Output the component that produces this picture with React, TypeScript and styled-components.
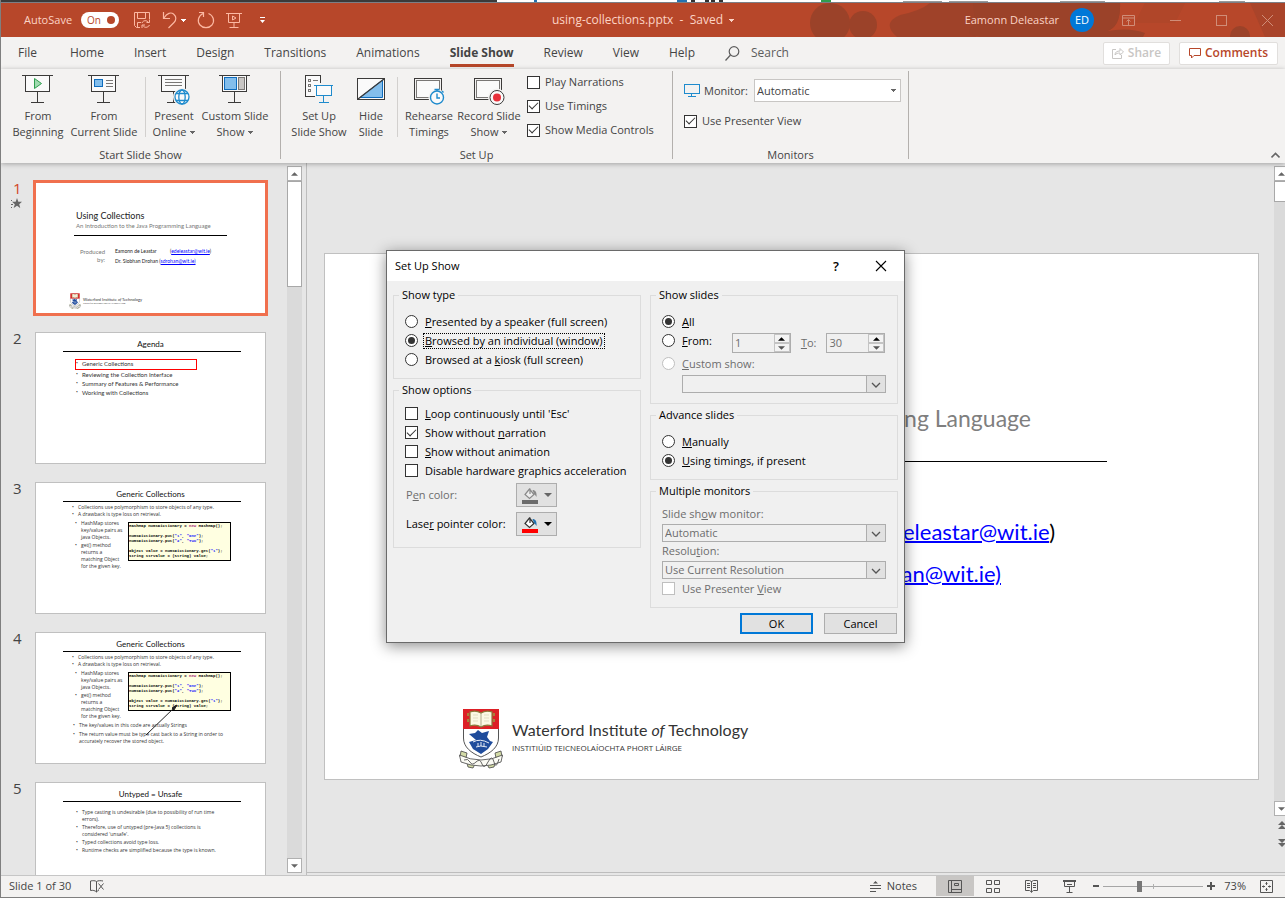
import React from "react";
import styled, { createGlobalStyle, css } from "styled-components";

const ui = '"Open Sans", "Noto Sans", sans-serif';
const slideFont = 'Lato, "Open Sans", sans-serif';
const brand = "#b7472a";
const ink = "#444444";

const GlobalStyle = createGlobalStyle`
  *, *::before, *::after { box-sizing: border-box; }
  body { margin: 0; font-family: ${ui}; font-size: 12px; line-height: 16px; color: ${ink}; }
  button, input, select { font: inherit; color: inherit; margin: 0; padding: 0; }
  button { background: none; border: 0; cursor: default; white-space: nowrap; }
  svg { display: block; flex: none; }
`;

/* ---------- window frame ---------- */
const Window = styled.div`
  display: flex;
  flex-direction: column;
  height: 100vh;
  overflow: hidden;
  border-left: 1px solid #7f7f7f;
  border-bottom: 1px solid #7f7f7f;
  background: #e6e6e6;
`;
const Backdrop = styled.div`
  flex: none;
  display: flex;
  height: 3px;
  background: #fff;
  border-bottom: 1px solid #7c7f86;
`;
const BackdropDark = styled.div`
  width: 496px;
  background: #3a3a3a;
`;

const TitleBar = styled.header`
  position: relative;
  flex: none;
  display: flex;
  align-items: center;
  justify-content: space-between;
  height: 34px;
  background: ${brand};
  color: #fcd4c6;
`;
const TitleArt = styled.svg`
  position: absolute;
  top: 0;
  right: 0;
`;
const QuickAccess = styled.div`
  display: flex;
  align-items: center;
  padding-left: 23px;
  gap: 11px;
`;
const AutoSave = styled.label`
  display: flex;
  align-items: center;
  gap: 9px;
  padding-right: 3px;
  font-size: 11px;
`;
const Toggle = styled.button`
  display: flex;
  align-items: center;
  justify-content: space-between;
  width: 38px;
  height: 16px;
  padding: 0 4px 0 6px;
  border-radius: 8px;
  background: #fff;
  color: ${brand};
  font-size: 10px;
  &::after {
    content: "";
    width: 8px;
    height: 8px;
    border-radius: 50%;
    background: ${brand};
  }
`;
const QuickButton = styled.button`
  display: flex;
  align-items: center;
  gap: 4px;
`;
const DocTitle = styled.h1`
  position: absolute;
  left: 0;
  right: 0;
  margin: 0;
  display: flex;
  justify-content: center;
  align-items: center;
  gap: 6px;
  font-size: 12px;
  font-weight: 400;
`;
const Account = styled.div`
  position: relative;
  display: flex;
  align-items: center;
  font-size: 11px;
`;
const Avatar = styled.span`
  display: grid;
  place-items: center;
  width: 24px;
  height: 24px;
  margin: 0 28px 0 11px;
  border-radius: 50%;
  background: #0078d7;
  color: #fff;
  font-size: 11px;
`;
const WindowButtons = styled.div`
  display: flex;
  align-items: center;
  gap: 35px;
  padding-right: 12px;
`;

/* ---------- ribbon ---------- */
const TabRow = styled.nav`
  flex: none;
  display: flex;
  align-items: center;
  height: 32px;
  padding: 0 7px 0 17px;
  background: #f3f2f1;
`;
const Tab = styled.button<{ $active?: boolean }>`
  height: 28px;
  margin-right: 30px;
  border-top: 3px solid transparent;
  border-bottom: 3px solid ${(p) => (p.$active ? brand : "transparent")};
  font-weight: ${(p) => (p.$active ? 700 : 400)};
  &:first-child { margin-right: 33px; }
`;
const SearchButton = styled.button`
  display: flex;
  align-items: center;
  gap: 11px;
  color: #5c5c5c;
`;
const TabActions = styled.div`
  display: flex;
  gap: 9px;
  margin-left: auto;
`;
const ActionButton = styled.button<{ $muted?: boolean }>`
  display: flex;
  align-items: center;
  justify-content: center;
  gap: 4px;
  width: ${(p) => (p.$muted ? 67 : 99)}px;
  height: 23px;
  background: #fff;
  border: 1px solid #e1dfdd;
  border-radius: 2px;
  color: ${(p) => (p.$muted ? "#c8c6c4" : brand)};
  font-weight: 600;
`;
const Ribbon = styled.div`
  position: relative;
  z-index: 1;
  flex: none;
  display: flex;
  height: 94px;
  padding-top: 2px;
  background: #f3f2f1;
  box-shadow: 0 1px 5px rgba(0, 0, 0, 0.3);
`;
const Group = styled.section`
  display: flex;
  flex-direction: column;
  justify-content: space-between;
  height: 88px;
  padding: 0 7px;
  border-right: 1px solid #b3b0ad;
`;
const GroupBody = styled.div`
  display: flex;
`;
const GroupLabel = styled.div`
  text-align: center;
  font-size: 11px;
  line-height: 8px;
`;
const BigButton = styled.button<{ $w: number }>`
  display: flex;
  flex-direction: column;
  align-items: center;
  width: ${(p) => p.$w}px;
  padding-top: 3px;
  font-size: 11px;
  & svg.big { margin-bottom: 3px; }
`;
const Line = styled.span`
  display: flex;
  align-items: center;
  gap: 4px;
`;
const Divider = styled.i`
  width: 1px;
  height: 60px;
  margin: 6px 5px 0;
  background: #d2d0ce;
`;
const CheckColumn = styled.div`
  display: flex;
  flex-direction: column;
  gap: 8px;
  width: 142px;
  padding: 3px 0 0 4px;
  font-size: 11px;
`;
const MonitorColumn = styled.div`
  display: flex;
  flex-direction: column;
  gap: 11px;
  width: 221px;
  padding: 8px 0 0 4px;
  font-size: 11px;
`;
const CheckLabel = styled.label`
  display: flex;
  align-items: center;
  gap: 5px;
  white-space: nowrap;
`;
const MonitorRow = styled.label`
  display: flex;
  align-items: center;
  gap: 4px;
`;
const Collapse = styled.button`
  position: absolute;
  right: 5px;
  bottom: 4px;
`;

/* ---------- form controls ---------- */
const box = css`
  appearance: none;
  flex: none;
  display: grid;
  place-items: center;
  width: 13px;
  height: 13px;
  background: #fff;
  border: 1px solid #333;
  &:disabled { border-color: #bfbfbf; }
`;
const Check = styled.input.attrs({ type: "checkbox" })`
  ${box}
  &:checked::after {
    content: "";
    width: 9px;
    height: 5px;
    margin-top: -3px;
    border-left: 1px solid #333;
    border-bottom: 1px solid #333;
    transform: rotate(-45deg);
  }
`;
const Radio = styled.input.attrs({ type: "radio" })`
  ${box}
  border-radius: 50%;
  &:checked::after {
    content: "";
    width: 7px;
    height: 7px;
    border-radius: 50%;
    background: #333;
  }
`;
const SelectWrap = styled.span`
  position: relative;
  display: block;
  flex: 1;
`;
const SelectArrow = styled.span<{ $boxed?: boolean }>`
  position: absolute;
  top: 0;
  right: 0;
  bottom: 0;
  display: grid;
  place-items: center;
  width: ${(p) => (p.$boxed ? 20 : 16)}px;
  pointer-events: none;
  ${(p) => p.$boxed && "padding-top: 2px; border: 1px solid #adadad; background: #e1e1e1;"}
`;
const RibbonSelect = styled.select`
  appearance: none;
  display: block;
  width: 147px;
  height: 23px;
  margin-left: auto;
  padding-left: 2px;
  background: #fff;
  border: 1px solid #c8c6c4;
  border-radius: 0;
`;
const DialogSelect = styled.select`
  appearance: none;
  display: block;
  width: 100%;
  height: 18px;
  padding-left: 2px;
  background: #f0f0f0;
  border: 1px solid #adadad;
  border-radius: 0;
  line-height: 14px;
  color: #6d6d6d;
  opacity: 1;
`;

/* ---------- workspace ---------- */
const Workspace = styled.main`
  flex: 1;
  display: flex;
  min-height: 0;
  background: #e6e6e6;
`;
const ThumbPane = styled.aside`
  flex: none;
  display: flex;
  width: 306px;
  padding-right: 4px;
  border-right: 1px solid #bdbdbd;
`;
const ThumbList = styled.ol`
  flex: 1;
  display: flex;
  flex-direction: column;
  gap: 18px;
  margin: 0;
  padding: 19px 0 0;
  list-style: none;
  overflow: hidden;
`;
const ThumbItem = styled.li`
  flex: none;
  display: flex;
`;
const ThumbNumber = styled.div<{ $active?: boolean }>`
  width: 34px;
  padding: 0 0 0 12px;
  font-size: 15px;
  line-height: 12px;
  color: ${(p) => (p.$active ? "#d24726" : ink)};
  & svg { margin: 4px 0 0 -2px; }
`;
const Thumb = styled.div<{ $active?: boolean }>`
  width: 231px;
  height: 132px;
  background: #fff;
  border: 1px solid #c0c0c0;
  font-family: ${slideFont};
  font-size: 6px;
  line-height: 7px;
  color: #333;
  ${(p) => p.$active && "border-color: #f0704e; box-shadow: 0 0 0 2px #f0704e;"}
`;
const ThumbTitle = styled.h2`
  margin: 0 24px 0 27px;
  padding: 5px 3px 1px 0;
  border-bottom: 1px solid #000;
  text-align: center;
  font-size: 8px;
  line-height: 12px;
  font-weight: 400;
  color: #111;
`;
const Bullets = styled.ul<{ $left: number; $top?: number; $gap?: number; $width?: number; $dense?: boolean }>`
  flex: none;
  display: flex;
  flex-direction: column;
  gap: ${(p) => p.$gap ?? 0}px;
  margin: ${(p) => p.$top ?? 0}px 0 0 ${(p) => p.$left}px;
  padding: 0;
  list-style: none;
  ${(p) => p.$width && `width: ${p.$width}px;`}
  ${(p) => p.$dense && `font-family: ${ui}; font-size: 5px;`}
  & li { display: flex; gap: 4px; white-space: pre; }
  & li::before { content: "•"; width: 2px; font-family: ${ui}; font-size: 5px; }
`;
const CodeRow = styled.div`
  display: flex;
  gap: 3px;
  align-items: flex-start;
  height: 54px;
`;
const Code = styled.pre`
  width: 103px;
  height: 39px;
  margin: 4px 0 0;
  padding: 1px 0 0;
  border: 1px solid #000;
  background: #ffffe1;
  font: 700 4px/5px "Liberation Mono", monospace;
  color: #000;
  & b { color: #a31571; }
  & q { color: #1a1aff; quotes: none; }
`;
const Boxed = styled.div`
  width: 122px;
  height: 11px;
  margin: 7px 0 0 39px;
  border: 1px solid #f00;
`;
const Arrow = styled.svg`
  position: absolute;
  left: 108px;
  top: 70px;
`;
const ThumbFrame = styled.div`
  position: relative;
`;
const MiniIntro = styled.div`
  margin: 27px 38px 0 38px;
  padding: 0 0 5px 2px;
  border-bottom: 1px solid #000;
  line-height: 9px;
  font-size: 6px;
  color: #777;
  & strong { display: block; font-weight: 400; font-size: 9px; line-height: 11px; color: #222; }
`;
const MiniAuthors = styled.div`
  display: grid;
  grid-template-columns: 26px 45px auto;
  gap: 3px 10px;
  justify-content: start;
  margin: 12px 0 28px 43px;
  white-space: nowrap;
  font-size: 5px;
  color: #222;
  & > span:first-child { grid-row: span 2; white-space: normal; text-align: right; font-size: 6px; line-height: 8px; color: #777; }
  & > span:last-child { grid-column: 2 / span 2; }
`;
const Mail = styled.a`
  color: #0000ff;
  text-decoration: underline;
`;
const Brand = styled.div<{ $mini?: boolean }>`
  display: flex;
  align-items: center;
  gap: ${(p) => (p.$mini ? 2 : 8)}px;
  margin-left: ${(p) => (p.$mini ? 33 : 0)}px;
  white-space: nowrap;
  color: #333;
  font-family: ${slideFont};
  font-size: ${(p) => (p.$mini ? 4 : 16)}px;
  line-height: ${(p) => (p.$mini ? 5 : 20)}px;
  & small {
    display: block;
    font-family: ${ui};
    font-size: ${(p) => (p.$mini ? 2 : 8)}px;
    line-height: ${(p) => (p.$mini ? 4 : 16)}px;
  }
`;

const ScrollTrack = styled.div`
  flex: none;
  display: flex;
  flex-direction: column;
  width: 15px;
  margin-top: 3px;
  background: #dadada;
`;
const ScrollButton = styled.button`
  display: grid;
  place-items: center;
  height: 15px;
  background: #fff;
  border: 1px solid #b0b0b0;
`;
const ScrollThumb = styled.div<{ $h: number }>`
  height: ${(p) => p.$h}px;
  margin-bottom: auto;
  background: #fff;
  border: 1px solid #a8a8a8;
`;
const JumpButton = styled.button`
  display: grid;
  place-items: center;
  height: 18px;
  background: #e6e6e6;
`;
const ThumbScroll = styled(ScrollTrack)`
  margin-bottom: 2px;
`;
const StageScroll = styled(ScrollTrack)`
  width: 11px;
  overflow: hidden;
  margin-bottom: 20px;
  & > * { flex: none; width: 15px; }
`;
const Stage = styled.section`
  flex: 1;
  display: flex;
  min-width: 0;
  margin-bottom: 2px;
  border-bottom: 1px solid #bdbdbd;
`;
const StageCenter = styled.div`
  flex: 1;
  display: flex;
  align-items: center;
  min-width: 0;
  padding: 0 15px 2px 17px;
`;
const Slide = styled.article`
  flex: 1;
  display: flex;
  flex-direction: column;
  min-width: 0;
  aspect-ratio: 71 / 40;
  padding: 149px 0 10px;
  background: #fff;
  border: 1px solid #c0c0c0;
  font-family: ${slideFont};
  white-space: nowrap;
`;
const Subtitle = styled.p`
  margin: 0 227px 0 0;
  text-align: right;
  font-size: 23px;
  line-height: 30px;
  color: #7f7f7f;
`;
const Rule = styled.hr`
  align-self: stretch;
  height: 1px;
  margin: 28px 151px 49px 159px;
  border: 0;
  background: #000;
`;
const MailRow = styled.p<{ $right: number }>`
  margin: 0 ${(p) => p.$right}px 0 0;
  text-align: right;
  font-size: 22px;
  line-height: 42px;
  color: #000;
  & a { text-decoration-thickness: 2px; }
`;
const SlideBrand = styled.footer`
  margin: auto 0 0 133px;
`;

/* ---------- status bar ---------- */
const StatusBar = styled.footer`
  flex: none;
  display: flex;
  align-items: center;
  height: 22px;
  padding: 0 12px 1px 8px;
  background: #f3f2f1;
  border-top: 1px solid #c6c6c6;
  font-size: 11px;
`;
const StatusButton = styled.button<{ $active?: boolean }>`
  display: grid;
  place-items: center;
  width: 38px;
  height: 20px;
  background: ${(p) => (p.$active ? "#c8c6c4" : "transparent")};
`;
const NotesButton = styled.button`
  display: flex;
  align-items: center;
  gap: 6px;
  margin: 0 19px 0 auto;
`;
const ProofButton = styled.button`
  margin-left: 19px;
`;
const ZoomButton = styled.button`
  width: 15px;
  height: 20px;
  display: grid;
  place-items: center;
`;
const Zoom = styled.input.attrs({ type: "range" })`
  appearance: none;
  width: 100px;
  height: 13px;
  background:
    linear-gradient(#b0b0b0, #b0b0b0) 50px 4px / 1px 5px no-repeat,
    linear-gradient(#a6a6a6, #a6a6a6) 0 6px / 100% 1px no-repeat;
  &::-webkit-slider-thumb {
    appearance: none;
    width: 5px;
    height: 11px;
    background: #777;
  }
`;
const ZoomText = styled.button`
  width: 28px;
  margin-right: 14px;
  text-align: right;
`;

/* ---------- dialog ---------- */
const Dialog = styled.div`
  position: absolute;
  z-index: 5;
  left: 386px;
  top: 250px;
  width: 519px;
  background: #f0f0f0;
  border: 1px solid #6a6a6a;
  box-shadow: 0 3px 14px rgba(0, 0, 0, 0.45);
  color: #000;
  font-size: 11px;
  line-height: 14px;
`;
const DialogHeader = styled.div`
  display: flex;
  align-items: center;
  height: 30px;
  padding: 0 17px 0 8px;
  background: #fff;
`;
const DialogTitle = styled.h2`
  flex: 1;
  margin: 0;
  font-size: 11px;
  font-weight: 400;
`;
const HelpButton = styled.button`
  margin-right: 36px;
  font-size: 13px;
  font-weight: 600;
`;
const DialogBody = styled.div`
  display: grid;
  grid-template-columns: 1fr 1fr;
  gap: 9px;
  padding: 7px 6px 0;
`;
const Column = styled.div`
  display: flex;
  flex-direction: column;
  gap: 4px;
`;
const FieldGroup = styled.fieldset<{ $top?: number }>`
  margin: 0;
  padding: ${(p) => p.$top ?? 10}px 11px 9px 11px;
  min-width: 0;
  border: 1px solid #dcdcdc;
`;
const Legend = styled.legend`
  margin-left: -6px;
  padding: 0 3px;
`;
const Option = styled.label<{ $off?: boolean }>`
  display: flex;
  align-items: center;
  gap: 6px;
  height: 19px;
  white-space: nowrap;
  color: ${(p) => (p.$off ? "#6d6d6d" : "#000")};
`;
const OptionText = styled.span<{ $focus?: boolean }>`
  padding: 0 1px;
  ${(p) => p.$focus && "outline: 1px dotted #000;"}
`;
const RangeRow = styled.div`
  display: flex;
  align-items: flex-start;
  height: 23px;
`;
const SpinLabel = styled.label<{ $gap?: number }>`
  display: flex;
  align-items: center;
  height: 20px;
  margin: 2px 0 0 ${(p) => p.$gap ?? 10}px;
  color: #6d6d6d;
`;
const SpinBox = styled.span`
  display: flex;
  width: 59px;
  height: 20px;
  border: 1px solid #adadad;
`;
const SpinInput = styled.input`
  flex: 1;
  width: 100%;
  min-width: 0;
  padding-left: 2px;
  border: 0;
  background: transparent;
`;
const SpinButtons = styled.span`
  display: grid;
  width: 16px;
  & button { display: grid; place-items: center; border: 1px solid #c4c4c4; background: #f3f3f3; }
`;
const ColorRow = styled.div<{ $off?: boolean }>`
  display: flex;
  align-items: center;
  height: 24px;
  margin: 3px 0 5px;
  padding-left: 1px;
  color: ${(p) => (p.$off ? "#6d6d6d" : "#000")};
  & + & { margin: 0 0 2px; }
  & > span { width: 110px; }
`;
const ColorButton = styled.button`
  display: flex;
  align-items: center;
  justify-content: center;
  gap: 5px;
  width: 41px;
  height: 24px;
  background: #e1e1e1;
  border: 1px solid #adadad;
`;
const Field = styled.label<{ $indent?: boolean }>`
  display: block;
  padding: ${(p) => (p.$indent ? "2px 0 1px 20px" : "0")};
  color: #6d6d6d;
`;
const FieldText = styled.span`
  display: block;
  padding: 2px 0 3px;
`;
const DialogButtons = styled.div`
  display: flex;
  justify-content: flex-end;
  gap: 11px;
  padding: 5px 7px 8px;
`;
const PushButton = styled.button<{ $primary?: boolean }>`
  width: 73px;
  height: 21px;
  background: #e1e1e1;
  border: ${(p) => (p.$primary ? "2px solid #0078d7" : "1px solid #adadad")};
`;

/* ---------- icons ---------- */
const Caret = ({ color = "#666", w = 5 }: { color?: string; w?: number }) => (
  <svg width={w} height={(w + 1) / 2} viewBox={`0 0 ${w} ${(w + 1) / 2}`} fill={color} shapeRendering="crispEdges">
    <path d={`M0 0H${w}L${w / 2} ${(w + 1) / 2}Z`} />
  </svg>
);
const Tri = ({ up, w = 7, color = "#666" }: { up?: boolean; w?: number; color?: string }) => (
  <svg width={w} height="4" viewBox="0 0 8 4" fill={color}>
    <path d={up ? "M0 4L4 0L8 4Z" : "M0 0H8L4 4Z"} />
  </svg>
);
const Screen = ({ children }: { children: React.ReactNode }) => (
  <svg className="big" width="34" height="31" viewBox="0 0 34 31" fill="none" stroke="#3b3a39" shapeRendering="crispEdges">
    <path d="M4.5 2V17.5H28.5V2" fill="#fafafa" />
    <path d="M1 1.5H32M16.5 18V28M10 28.5H23" />
    {children}
  </svg>
);
const icons = {
  beginning: (
    <Screen>
      <path d="M13.500 4.500L20.500 9.500L13.500 14.500Z" fill="#a0dbb0" stroke="#2f9e4f" shapeRendering="auto" />
    </Screen>
  ),
  current: (
    <Screen>
      <rect x="7.500" y="5.500" width="8" height="7" fill="#83beec" stroke="#0f6cbd" />
      <path d="M19 6.500H26M19 9.500H26M19 12.500H26" stroke="#797775" />
    </Screen>
  ),
  online: (
    <Screen>
      <path d="M8 5.500H25M8 8.500H25M8 11.500H25" stroke="#797775" />
      <g stroke="#1e8bcd" strokeWidth="1.300" shapeRendering="auto">
        <circle cx="25" cy="23" r="9" fill="#f3f2f1" stroke="none" />
        <circle cx="25" cy="23" r="7" fill="#fafafa" />
        <ellipse cx="25" cy="23" rx="3.200" ry="7" />
        <path d="M19 19.500H31M19 26.500H31" />
      </g>
    </Screen>
  ),
  custom: (
    <Screen>
      <rect x="6.500" y="3.500" width="12" height="12" fill="#83beec" stroke="#0f6cbd" />
      <rect x="20.500" y="3.500" width="6" height="12" fill="#c8c6c4" stroke="#797775" />
    </Screen>
  ),
  setup: (
    <svg className="big" width="30" height="31" viewBox="0 0 30 31" fill="none" stroke="#3b3a39" shapeRendering="crispEdges">
      <path d="M11 22.500H1.500V1.500H16.500V9" fill="#fafafa" />
      <rect x="4.500" y="5.500" width="2" height="2" stroke="#797775" />
      <rect x="4.500" y="10.500" width="2" height="2" stroke="#797775" />
      <rect x="4.500" y="15.500" width="2" height="2" stroke="#797775" />
      <path d="M9 6.500H14" stroke="#797775" />
      <g stroke="#1e8bcd">
        <path d="M12.500 12V21.500H27.500V12" fill="#fafafa" />
        <path d="M10 11.500H29M19.500 22V28M15 28.500H25" />
      </g>
    </svg>
  ),
  hide: (
    <svg className="big" width="30" height="31" viewBox="0 0 30 31" fill="none" stroke="#3b3a39">
      <rect x="1.500" y="4.500" width="27" height="21" fill="#fafafa" />
      <path d="M4 23.500H26.500V6Z" fill="#83beec" stroke="#0f6cbd" />
      <path d="M2 25L28 5" strokeWidth="1.300" />
    </svg>
  ),
  rehearse: (
    <svg className="big" width="32" height="31" viewBox="0 0 32 31" fill="none" stroke="#3b3a39">
      <rect x="1.500" y="4.500" width="27" height="21" fill="#f3f2f1" />
      <rect x="3.500" y="6.500" width="23" height="17" fill="#fafafa" stroke="#797775" />
      <circle cx="24" cy="23.500" r="8.500" fill="#f3f2f1" stroke="none" />
      <g stroke="#1e8bcd" strokeWidth="1.400">
        <circle cx="24" cy="23.500" r="6.500" fill="#fafafa" />
        <path d="M24 19.500V24H27M21.500 15.500H26.500M24 15.500V17M29 17L30.500 18.500" />
      </g>
    </svg>
  ),
  record: (
    <svg className="big" width="32" height="31" viewBox="0 0 32 31" fill="none" stroke="#3b3a39">
      <rect x="1.500" y="4.500" width="27" height="21" fill="#f3f2f1" />
      <rect x="3.500" y="6.500" width="23" height="17" fill="#fafafa" stroke="#797775" />
      <circle cx="24" cy="23.500" r="9" fill="#f3f2f1" stroke="none" />
      <circle cx="24" cy="23.500" r="7" fill="#fafafa" />
      <circle cx="24" cy="23.500" r="4" fill="#e8303a" stroke="none" />
    </svg>
  ),
};
const Bucket = ({ bar, off }: { bar: string; off?: boolean }) => (
  <svg width="17" height="17" viewBox="0 0 17 17" fill="none">
    <path d="M8 1.500V7M7.500 2L3 7.500L7.500 11.500L12 7.500L7.500 2Z" stroke={off ? "#8a8a8a" : "#333"} fill={off ? "#eee" : "#fff"} strokeWidth="1.200" />
    <path d="M10.500 3C13.500 3 15 5.500 14.500 10C13.500 8.500 13 7.500 12 7Z" fill={off ? "#8a8a8a" : "#2472b0"} />
    <rect y="13" width="16" height="4" fill={bar} />
  </svg>
);
const Crest = ({ width, height }: { width: number; height: number }) => (
  <svg width={width} height={height} viewBox="0 0 46 61">
    <path d="M5.500 20V30C5.500 39 13 45 23 49C33 45 40.500 39 40.500 30V20Z" fill="#fff" stroke="#555" />
    <path d="M5 1H41V21H5Z" fill="#dd1f26" />
    <path d="M12 4Q18 2 23 5Q28 2 34 4V18Q28 16 23 19Q18 16 12 18Z" fill="#fbf8e4" stroke="#8a7a3c" strokeWidth="1.200" />
    <path d="M23 5V19" stroke="#8f8764" strokeWidth="0.700" />
    <path d="M15 7H20M26 7H31M15 10H20M26 10H31M15 13H20M26 13H31" stroke="#d8d3b8" strokeWidth="0.700" />
    <path d="M10 5V8M10 11V14M36 5V8M36 11V14" stroke="#a8803a" strokeWidth="2" />
    <path d="M11 26L17 25L20 22L24 25L31 23L29 29L32 33L35 34L30 41L23 46L15 41L11 34L18 32Z" fill="#1f4c9c" />
    <path d="M15 34Q22 30 31 35M20 38V35M23 38V34M26 38V35M18 39Q22 37 29 39" stroke="#fff" strokeWidth="0.900" fill="none" />
    <path d="M3 43L9 45L8 50L2 49ZM43 43L37 45L38 50L44 49Z" fill="#d3dba6" stroke="#444" strokeWidth="0.800" />
    <path d="M9 55L17 56L15 60L10 59ZM37 55L29 56L31 60L36 59Z" fill="#d3dba6" stroke="#444" strokeWidth="0.800" />
    <path d="M1.500 47Q23 57 44.500 47L43 54Q23 62 3 54Z" fill="#fbfbf4" stroke="#444" strokeWidth="0.800" />
    <path d="M6 52Q10 50 12 54T18 54T24 56T30 54T36 54T41 51" stroke="#555" strokeWidth="0.900" fill="none" />
  </svg>
);
const Logo = ({ mini }: { mini?: boolean }) => (
  <Brand $mini={mini}>
    <Crest width={mini ? 12 : 46} height={mini ? 16 : 61} />
    <div>
      Waterford Institute <em>of</em> Technology
      <small>INSTITIÚID TEICNEOLAÍOCHTA PHORT LÁIRGE</small>
    </div>
  </Brand>
);
const Chevron = () => (
  <svg width="10" height="6" viewBox="0 0 10 6" fill="none" stroke="#555" strokeWidth="1.300">
    <path d="M1 1L5 5L9 1" />
  </svg>
);

/* ---------- content ---------- */
const CodeSample = () => (
  <Code>
    {"HashMap numsDictionary = "}<b>new</b>{" HashMap();\n\nnumsDictionary.put("}<q>"1"</q>{", "}<q>"One"</q>{");\nnumsDictionary.put("}<q>"2"</q>{", "}<q>"Two"</q>{");\n\nObject value = numsDictionary.get("}<q>"1"</q>{");\nString strValue = (String) value;"}
  </Code>
);
const GenericContent = () => (
  <>
    <ThumbTitle>Generic Collections</ThumbTitle>
    <Bullets $dense $left={36} $top={2}>
      <li>Collections use polymorphism to store objects of any type.</li>
      <li>A drawback is type loss on retrieval.</li>
    </Bullets>
    <CodeRow>
      <Bullets $dense $left={39} $top={2} $gap={1} $width={50}>
        <li>{"HashMap stores\nkey/value pairs as\njava Objects."}</li>
        <li>{"get() method\nreturns a\nmatching Object\nfor the given key."}</li>
      </Bullets>
      <CodeSample />
    </CodeRow>
  </>
);

const Opt = ({ radio, off, focus, name, checked, children }: {
  radio?: boolean; off?: boolean; focus?: boolean; name?: string; checked?: boolean; children: React.ReactNode;
}) => (
  <Option $off={off}>
    {radio ? <Radio name={name} defaultChecked={checked} disabled={off} /> : <Check defaultChecked={checked} disabled={off} />}
    <OptionText $focus={focus}>{children}</OptionText>
  </Option>
);
const Drop = ({ value, label }: { value?: string; label?: string }) => (
  <SelectWrap>
    <DialogSelect disabled aria-label={label}>
      <option>{value}</option>
    </DialogSelect>
    <SelectArrow $boxed><Chevron /></SelectArrow>
  </SelectWrap>
);
const Spin = ({ value, label, id }: { value: string; label: string; id: string }) => (
  <SpinBox>
    <SpinInput id={id} defaultValue={value} aria-label={label} />
    <SpinButtons>
      <button aria-label={`Increase ${label}`}><Tri up color="#000" /></button>
      <button aria-label={`Decrease ${label}`}><Tri color="#555" /></button>
    </SpinButtons>
  </SpinBox>
);

const SetUpShow = () => (
  <Dialog role="dialog" aria-labelledby="setup-title">
    <DialogHeader>
      <DialogTitle id="setup-title">Set Up Show</DialogTitle>
      <HelpButton>?</HelpButton>
      <button aria-label="Close">
        <svg width="12" height="12" viewBox="0 0 12 12" stroke="#000" strokeWidth="1.100"><path d="M1 1L11 11M11 1L1 11" /></svg>
      </button>
    </DialogHeader>
    <DialogBody>
      <Column>
        <FieldGroup>
          <Legend>Show type</Legend>
          <Opt radio name="type"><u>P</u>resented by a speaker (full screen)</Opt>
          <Opt radio name="type" checked focus><u>B</u>rowsed by an individual (window)</Opt>
          <Opt radio name="type">Browsed at a <u>k</u>iosk (full screen)</Opt>
        </FieldGroup>
        <FieldGroup $top={7}>
          <Legend>Show options</Legend>
          <Opt><u>L</u>oop continuously until 'Esc'</Opt>
          <Opt checked>Show without <u>n</u>arration</Opt>
          <Opt><u>S</u>how without animation</Opt>
          <Opt>Disable hardware <u>g</u>raphics acceleration</Opt>
          <ColorRow $off>
            <span>P<u>e</u>n color:</span>
            <ColorButton disabled aria-label="Pen color"><Bucket bar="#6b6b6b" off /><Tri w={8} /></ColorButton>
          </ColorRow>
          <ColorRow>
            <span>Lase<u>r</u> pointer color:</span>
            <ColorButton aria-label="Laser pointer color"><Bucket bar="#f00" /><Tri w={8} color="#000" /></ColorButton>
          </ColorRow>
        </FieldGroup>
      </Column>
      <Column>
        <FieldGroup>
          <Legend>Show slides</Legend>
          <Opt radio name="slides" checked><u>A</u>ll</Opt>
          <RangeRow>
            <Opt radio name="slides"><u>F</u>rom:</Opt>
            <SpinLabel as="span" $gap={19}><Spin id="from-slide" value="1" label="From slide" /></SpinLabel>
            <SpinLabel htmlFor="to-slide"><u>T</u>o:</SpinLabel>
            <SpinLabel as="span"><Spin id="to-slide" value="30" label="To slide" /></SpinLabel>
          </RangeRow>
          <Opt radio name="slides" off><u>C</u>ustom show:</Opt>
          <Field $indent><Drop label="Custom show" /></Field>
        </FieldGroup>
        <FieldGroup>
          <Legend>Advance slides</Legend>
          <Opt radio name="advance"><u>M</u>anually</Opt>
          <Opt radio name="advance" checked><u>U</u>sing timings, if present</Opt>
        </FieldGroup>
        <FieldGroup $top={7}>
          <Legend>Multiple monitors</Legend>
          <Field><FieldText>Slide sh<u>o</u>w monitor:</FieldText><Drop value="Automatic" /></Field>
          <Field><FieldText>Resolu<u>t</u>ion:</FieldText><Drop value="Use Current Resolution" /></Field>
          <Opt off>Use Presenter <u>V</u>iew</Opt>
        </FieldGroup>
      </Column>
    </DialogBody>
    <DialogButtons>
      <PushButton $primary>OK</PushButton>
      <PushButton>Cancel</PushButton>
    </DialogButtons>
  </Dialog>
);

const tabs = ["File", "Home", "Insert", "Design", "Transitions", "Animations", "Slide Show", "Review", "View", "Help"];

export default function App() {
  return (
    <Window>
      <GlobalStyle />
      <Backdrop>
        <BackdropDark />
        <svg width="780" height="2" aria-hidden="true">
          <path d="M37 0H40V2H37ZM180 0H190V2H180Z" fill="#2472b0" />
          <path d="M194 0H198V2H194ZM208 0H212V2H208ZM214 0H218V2H214ZM222 0H226V2H222Z" fill="#333" />
          <path d="M324 0H334V2H324Z" fill="#2f9e4f" />
          <path d="M406 1H445V2H406ZM452 1H491V2H452ZM563 1H608V2H563ZM722 1H748V2H722Z" fill="#999" />
        </svg>
      </Backdrop>
      <TitleBar>
        <TitleArt width="500" height="34" viewBox="0 0 500 34" fill="#9b4229" aria-hidden="true">
          <circle cx="45" cy="20" r="20" /><circle cx="78" cy="22" r="14" />
          <path d="M145 0H335Q336 24 322 28H208Q200 28 190 34H112Q96 20 115 12Q135 8 145 0Z" opacity="0.850" />
          <path d="M188 0H335Q336 24 322 28Q345 24 360 30L358 34H200Q175 34 190 20Z" />
          <path d="M360 0H400L390 20H350Z" opacity="0.250" />
          <circle cx="455" cy="33" r="10" /><path d="M465 0H500V34H480Z" opacity="0.500" />
        </TitleArt>
        <QuickAccess>
          <AutoSave>AutoSave<Toggle role="switch" aria-checked="true">On</Toggle></AutoSave>
          <QuickButton aria-label="Save">
            <svg width="18" height="18" viewBox="0 0 18 18" fill="none" stroke="#fcb8a2">
              <path d="M7 16.500H3.500L1.500 14.500V1.500H16.500V8M4.500 2V7.500H12.500V2M4.500 16V11.500H8" />
              <path d="M9 12C10 9 14 9 15.500 11.500M16.500 8.500V11.500H13.500M16.500 14C15 17 11 17 10 14.500M9 17V14H12" />
            </svg>
          </QuickButton>
          <QuickButton aria-label="Undo">
            <svg width="15" height="18" viewBox="0 0 15 18" fill="none" stroke="#fcb8a2" strokeWidth="1.200">
              <path d="M1.500 1V7.500H8M2 7C5 2 9 1 11.500 3C14.500 5.500 14.500 9 12 11.500L6.500 17" />
            </svg>
            <Caret color="#fff" />
          </QuickButton>
          <QuickButton aria-label="Redo">
            <svg width="18" height="18" viewBox="0 0 18 18" fill="none" stroke="#fcb8a2" strokeWidth="1.200">
              <path d="M2 1.500H6.500V6M6 2.500C1 5 0 10.500 3 14C6 17.500 12 17.500 15 14C18 10 16.500 4.500 11.500 2.500" />
            </svg>
          </QuickButton>
          <QuickButton aria-label="Start from beginning">
            <svg width="16" height="18" viewBox="0 0 16 18" fill="none" stroke="#fcb8a2">
              <path d="M0 2.500H16M2.500 3V11.500H13.500V3M8 12V16M3.500 16.500H12.500M6.500 5L10 7L6.500 9Z" />
            </svg>
          </QuickButton>
          <QuickButton aria-label="Customize">
            <svg width="18" height="8" viewBox="0 0 18 8" fill="#fff"><path d="M7 1H12V2H7ZM7 4H12L9.500 7Z" /></svg>
          </QuickButton>
        </QuickAccess>
        <DocTitle>using-collections.pptx&nbsp; -&nbsp; Saved <Caret color="#fcd4c6" /></DocTitle>
        <Account>
          Eamonn Deleastar
          <Avatar>ED</Avatar>
          <WindowButtons>
            <button aria-label="Ribbon options">
              <svg width="13" height="11" viewBox="0 0 13 11" fill="none" stroke="#d08d78"><path d="M.5.500H12.500V10.500H.5ZM.5 3H12.500M6.500 10V5M4.500 6.500L6.500 4.500L8.500 6.500" /></svg>
            </button>
            <button aria-label="Minimize"><svg width="11" height="11" stroke="#d08d78"><path d="M0 5.500H11" /></svg></button>
            <button aria-label="Maximize"><svg width="11" height="11" fill="none" stroke="#d08d78"><rect x=".5" y=".5" width="10" height="10" /></svg></button>
            <button aria-label="Close window"><svg width="11" height="11" stroke="#d08d78"><path d="M0 0L11 11M11 0L0 11" /></svg></button>
          </WindowButtons>
        </Account>
      </TitleBar>

      <TabRow>
        {tabs.map((t) => <Tab key={t} $active={t === "Slide Show"}>{t}</Tab>)}
        <SearchButton>
          <svg width="15" height="15" viewBox="0 0 15 15" fill="none" stroke="#5c5c5c" strokeWidth="1.200"><circle cx="9" cy="5.500" r="4.800" /><path d="M5.500 9L.5 14.500" /></svg>
          Search
        </SearchButton>
        <TabActions>
          <ActionButton $muted>
            <svg width="12" height="12" viewBox="0 0 12 12" fill="none" stroke="#c8c6c4"><path d="M4 2.500H.5V11.500H9.500V8M3 8C3 5 5 4 8 4V1.500L11.500 5L8 8V6C6 6 4 6.500 3 8Z" /></svg>
            Share
          </ActionButton>
          <ActionButton>
            <svg width="12" height="12" viewBox="0 0 12 12" fill="none" stroke={brand}><path d="M.5 1.500H11.500V8.500H5L2.500 11V8.500H.5Z" /></svg>
            Comments
          </ActionButton>
        </TabActions>
      </TabRow>

      <Ribbon>
        <Group>
          <GroupBody>
            <BigButton $w={60}>{icons.beginning}<Line>From</Line><Line>Beginning</Line></BigButton>
            <BigButton $w={72}>{icons.current}<Line>From</Line><Line>Current Slide</Line></BigButton>
            <Divider />
            <BigButton $w={46}>{icons.online}<Line>Present</Line><Line>Online <Caret /></Line></BigButton>
            <BigButton $w={76}>{icons.custom}<Line>Custom Slide</Line><Line>Show <Caret /></Line></BigButton>
          </GroupBody>
          <GroupLabel>Start Slide Show</GroupLabel>
        </Group>
        <Group>
          <GroupBody>
            <BigButton $w={62}>{icons.setup}<Line>Set Up</Line><Line>Slide Show</Line></BigButton>
            <BigButton $w={42}>{icons.hide}<Line>Hide</Line><Line>Slide</Line></BigButton>
            <Divider />
            <BigButton $w={52}>{icons.rehearse}<Line>Rehearse</Line><Line>Timings</Line></BigButton>
            <BigButton $w={68}>{icons.record}<Line>Record Slide</Line><Line>Show <Caret /></Line></BigButton>
            <CheckColumn>
              <CheckLabel><Check />Play Narrations</CheckLabel>
              <CheckLabel><Check defaultChecked />Use Timings</CheckLabel>
              <CheckLabel><Check defaultChecked />Show Media Controls</CheckLabel>
            </CheckColumn>
          </GroupBody>
          <GroupLabel>Set Up</GroupLabel>
        </Group>
        <Group>
          <GroupBody>
            <MonitorColumn>
              <MonitorRow>
                <svg width="16" height="13" viewBox="0 0 16 13" fill="none" stroke="#1e8bcd" shapeRendering="crispEdges"><path d="M.5.500H15.500V9.500H.5ZM7.500 10V12M4 12.500H12" /></svg>
                Monitor:
                <SelectWrap>
                  <RibbonSelect defaultValue="Automatic"><option>Automatic</option></RibbonSelect>
                  <SelectArrow><Caret /></SelectArrow>
                </SelectWrap>
              </MonitorRow>
              <CheckLabel><Check defaultChecked />Use Presenter View</CheckLabel>
            </MonitorColumn>
          </GroupBody>
          <GroupLabel>Monitors</GroupLabel>
        </Group>
        <Collapse aria-label="Collapse ribbon">
          <svg width="9" height="7" viewBox="0 0 9 7" fill="none" stroke="#666" strokeWidth="1.600"><path d="M.5 5.500L4.500 1.500L8.500 5.500" /></svg>
        </Collapse>
      </Ribbon>

      <Workspace>
        <ThumbPane>
          <ThumbList>
            <ThumbItem>
              <ThumbNumber $active>
                1
                <svg width="11" height="11" viewBox="0 0 11 11" fill="#666"><path d="M6 0L7.300 3.800H11L8.200 6.200L9.300 10L6 7.800L2.700 10L3.800 6.200L1 3.800H4.700ZM0 2H1V3H0ZM0 6H2V7H0ZM0 9H1V10H0Z" /></svg>
              </ThumbNumber>
              <Thumb $active>
                <MiniIntro><strong>Using Collections</strong>An Introduction to the Java Programming Language</MiniIntro>
                <MiniAuthors>
                  <span>Produced by:</span>
                  <span>Eamonn de Leastar</span>
                  <span>(<Mail href="mailto:edeleastar@wit.ie">edeleastar@wit.ie</Mail>)</span>
                  <span>Dr. Siobhan Drohan (<Mail href="mailto:sdrohan@wit.ie">sdrohan@wit.ie)</Mail></span>
                </MiniAuthors>
                <Logo mini />
              </Thumb>
            </ThumbItem>
            <ThumbItem>
              <ThumbNumber>2</ThumbNumber>
              <Thumb>
                <ThumbTitle>Agenda</ThumbTitle>
                <Boxed><Bullets $left={0}><li>Generic Collections</li></Bullets></Boxed>
                <Bullets $left={40} $top={1} $gap={2}>
                  <li>Reviewing the Collection Interface</li>
                  <li>{"Summary of Features & Performance"}</li>
                  <li>Working with Collections</li>
                </Bullets>
              </Thumb>
            </ThumbItem>
            <ThumbItem>
              <ThumbNumber>3</ThumbNumber>
              <Thumb><GenericContent /></Thumb>
            </ThumbItem>
            <ThumbItem>
              <ThumbNumber>4</ThumbNumber>
              <ThumbFrame>
                <Thumb>
                  <GenericContent />
                  <Bullets $dense $left={37} $gap={2}>
                    <li>The key/values in this code are actually Strings</li>
                    <li>{"The return value must be type cast back to a String in order to\naccurately recover the stored object."}</li>
                  </Bullets>
                </Thumb>
                <Arrow width="36" height="36" stroke="#222" fill="#222"><path d="M3 33L33 4" /><path d="M34 3L31 8L29 6Z" /></Arrow>
              </ThumbFrame>
            </ThumbItem>
            <ThumbItem>
              <ThumbNumber>5</ThumbNumber>
              <Thumb>
                <ThumbTitle>Untyped = Unsafe</ThumbTitle>
                <Bullets $dense $left={40} $top={7} $gap={1}>
                  <li>{"Type casting is undesirable (due to possibility of run time\nerrors)."}</li>
                  <li>{"Therefore, use of untyped (pre-Java 5) collections is\nconsidered 'unsafe'."}</li>
                  <li>Typed collections avoid type loss.</li>
                  <li>Runtime checks are simplified because the type is known.</li>
                </Bullets>
              </Thumb>
            </ThumbItem>
          </ThumbList>
          <ThumbScroll>
            <ScrollButton aria-label="Scroll up"><Tri up /></ScrollButton>
            <ScrollThumb $h={106} />
            <ScrollButton aria-label="Scroll down"><Tri /></ScrollButton>
          </ThumbScroll>
        </ThumbPane>
        <Stage>
          <StageCenter>
            <Slide>
              <Subtitle>An Introduction to the Java Programming Language</Subtitle>
              <Rule />
              <MailRow $right={203}>(<Mail href="mailto:edeleastar@wit.ie">edeleastar@wit.ie</Mail>)</MailRow>
              <MailRow $right={257}>(<Mail href="mailto:sdrohan@wit.ie">sdrohan@wit.ie)</Mail></MailRow>
              <SlideBrand><Logo /></SlideBrand>
            </Slide>
          </StageCenter>
          <StageScroll>
            <ScrollButton aria-label="Previous"><Tri up /></ScrollButton>
            <ScrollThumb $h={21} />
            <ScrollButton aria-label="Next"><Tri /></ScrollButton>
            <JumpButton aria-label="Previous slide"><svg width="8" height="8" fill="#666"><path d="M4 0L8 4H0ZM4 4L8 8H0Z" /></svg></JumpButton>
            <JumpButton aria-label="Next slide"><svg width="8" height="8" fill="#666"><path d="M0 0H8L4 4ZM0 4H8L4 8Z" /></svg></JumpButton>
          </StageScroll>
        </Stage>
      </Workspace>

      <StatusBar>
        Slide 1 of 30
        <ProofButton aria-label="Proofing">
          <svg width="15" height="13" viewBox="0 0 15 13" fill="none" stroke="#555"><path d="M6.500 12V1.500C5 .5 3 .5.500 1V10.500C3 10 5 10.500 6.500 12C7.500 11 8 10.500 9 10.500M6.500 1.500C8 .5 11 .5 13 1M8.500 3.500L13.500 9.500M13.500 3.500L8.500 9.500" /></svg>
        </ProofButton>
        <NotesButton>
          <svg width="11" height="11" viewBox="0 0 11 11" fill="#555"><path d="M5.500 0L8 2.500H3ZM0 4H11V5H0ZM0 7H11V8H0ZM0 10H6V11H0Z" /></svg>
          Notes
        </NotesButton>
        <StatusButton $active aria-label="Normal">
          <svg width="14" height="13" viewBox="0 0 14 13" fill="none" stroke="#555"><path d="M.5.500H13.500V12.500H.5ZM3.500.5V12.500M3.500 9.500H13.500M6.500 3.500H10.500V5.500H6.500Z" /></svg>
        </StatusButton>
        <StatusButton aria-label="Slide sorter">
          <svg width="14" height="13" viewBox="0 0 14 13" fill="none" stroke="#555"><path d="M.5.500H5.500V4.500H.5ZM8.500.5H13.500V4.500H8.500ZM.5 8.500H5.500V12.500H.5ZM8.500 8.500H13.500V12.500H8.500Z" /></svg>
        </StatusButton>
        <StatusButton aria-label="Reading view">
          <svg width="13" height="13" viewBox="0 0 13 13" fill="none" stroke="#555"><path d="M.5.500H4.500L6.500 1.500L8.500.5H12.500V10.500H8.500L6.500 12L4.500 10.500H.5ZM6.500 1V12.500M2 3.500H5M2 5.500H5M2 7.500H5M8 3.500H11M8 5.500H11M8 7.500H11" /></svg>
        </StatusButton>
        <StatusButton aria-label="Slide show">
          <svg width="13" height="13" viewBox="0 0 13 13" fill="none" stroke="#555"><path d="M0 1H13" strokeWidth="2" /><path d="M1.500 2V6.500H11.500V2M4 4.500H9M6.500 7V12M3.500 12.500H9.500" /></svg>
        </StatusButton>
        <ZoomButton aria-label="Zoom out"><svg width="6" height="2" fill="#555"><rect width="6" height="2" /></svg></ZoomButton>
        <Zoom aria-label="Zoom" min={0} max={100} defaultValue={36} />
        <ZoomButton aria-label="Zoom in"><svg width="8" height="8" fill="#555"><path d="M3 0H5V3H8V5H5V8H3V5H0V3H3Z" /></svg></ZoomButton>
        <ZoomText>73%</ZoomText>
        <button aria-label="Fit to window">
          <svg width="13" height="13" viewBox="0 0 13 13" fill="none" stroke="#555"><path d="M.5.500H12.500V12.500H.5ZM6.500 2V5M5.500 3.500H7.500M6.500 8V11M5.500 9.500H7.500M2 6.500H5M3.500 5.500V7.500M8 6.500H11M9.500 5.500V7.500" /></svg>
        </button>
      </StatusBar>
      <SetUpShow />
    </Window>
  );
}
